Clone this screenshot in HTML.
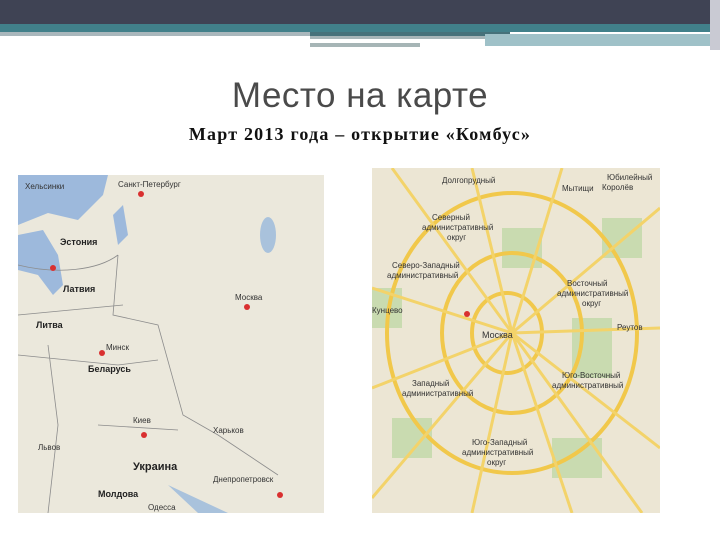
<!DOCTYPE html>
<html><head><meta charset="utf-8"><style>
body{margin:0;width:720px;height:540px;background:#fff;position:relative;overflow:hidden;font-family:"Liberation Sans",sans-serif}
.a{position:absolute}
</style></head><body>
<div class="a" style="left:0;top:0;width:720px;height:24px;background:#3f4354"></div>
<div class="a" style="left:0;top:24px;width:720px;height:8px;background:#41808a"></div>
<div class="a" style="left:0;top:32px;width:310px;height:4px;background:#a9b7bc"></div>
<div class="a" style="left:310px;top:32px;width:200px;height:4px;background:#46717a"></div>
<div class="a" style="left:310px;top:36px;width:175px;height:3px;background:#a7b5b8"></div>
<div class="a" style="left:310px;top:43px;width:110px;height:4px;background:#a6b5b6"></div>
<div class="a" style="left:485px;top:34px;width:225px;height:12px;background:#9fc1c8"></div>
<div class="a" style="left:710px;top:0;width:10px;height:50px;background:#c9cad3"></div>
<div class="a" style="left:0;top:76px;width:720px;text-align:center;font-size:35px;color:#4a4a4a;letter-spacing:0.5px">Место на карте</div>
<div class="a" style="left:0;top:124px;width:720px;text-align:center;font:bold 18px 'Liberation Serif',serif;color:#111;letter-spacing:1.2px">Март 2013 года – открытие «Комбус»</div>

<svg class="a" style="left:18px;top:175px" width="306" height="338" viewBox="0 0 306 338">
<rect width="306" height="338" fill="#ebe8dc"/>
<path d="M0 0H90L85 20L60 45L30 38L0 50Z" fill="#9db9dc"/>
<path d="M0 60L25 55L40 80L45 110L35 120L20 100L0 95Z" fill="#9db9dc"/>
<path d="M95 40L105 30L110 60L100 70Z" fill="#9db9dc"/>
<path d="M0 90C40 100 80 95 100 80M100 80L95 140L140 150L165 240L200 260L260 300M30 170L40 250L30 338M0 180L100 190L140 185M80 250L160 255M105 130L0 140" fill="none" stroke="#8c8c8c" stroke-width="0.8"/>
<ellipse cx="250" cy="60" rx="8" ry="18" fill="#a9c2dc"/>
<path d="M150 310L180 338H210Z" fill="#a9c2dc"/>
<g fill="#d93030"><circle cx="123" cy="19" r="3"/><circle cx="35" cy="93" r="3"/><circle cx="229" cy="132" r="3"/><circle cx="84" cy="178" r="3"/><circle cx="126" cy="260" r="3"/><circle cx="262" cy="320" r="3"/></g>
<g font-family="Liberation Sans" font-size="8" fill="#333">
<text x="100" y="12">Санкт-Петербург</text><text x="7" y="14">Хельсинки</text><text x="217" y="125">Москва</text><text x="88" y="175">Минск</text><text x="115" y="248">Киев</text><text x="195" y="258">Харьков</text><text x="195" y="307">Днепропетровск</text><text x="20" y="275">Львов</text><text x="130" y="335">Одесса</text>
<g font-weight="bold" font-size="9" fill="#222"><text x="42" y="70">Эстония</text><text x="45" y="117">Латвия</text><text x="18" y="153">Литва</text><text x="70" y="197">Беларусь</text><text x="115" y="295" font-size="11">Украина</text><text x="80" y="322">Молдова</text></g></g>
</svg>

<svg class="a" style="left:372px;top:168px" width="288" height="345" viewBox="0 0 288 345">
<rect width="288" height="345" fill="#ece6d4"/>
<g fill="#c9dbb0"><rect x="130" y="60" width="40" height="40"/><rect x="0" y="120" width="30" height="40"/><rect x="200" y="150" width="40" height="60"/><rect x="20" y="250" width="40" height="40"/><rect x="180" y="270" width="50" height="40"/><rect x="230" y="50" width="40" height="40"/></g>
<g fill="none" stroke="#f1c84b" stroke-width="4">
<ellipse cx="140" cy="165" rx="125" ry="140"/>
<ellipse cx="140" cy="165" rx="70" ry="80"/>
<ellipse cx="135" cy="165" rx="35" ry="40"/>
</g>
<g fill="none" stroke="#f3d36a" stroke-width="3">
<path d="M140 165L100 0M140 165L190 0M140 165L288 40M140 165L288 160M140 165L288 280M140 165L200 345M140 165L100 345M140 165L0 330M140 165L0 220M140 165L0 120M140 165L20 0M140 165L270 345"/>
</g>
<circle cx="95" cy="146" r="3" fill="#d93030"/>
<g font-family="Liberation Sans" font-size="8" fill="#333">
<text x="60" y="52">Северный</text><text x="50" y="62">административный</text><text x="75" y="72">округ</text>
<text x="20" y="100">Северо-Западный</text><text x="15" y="110">административный</text>
<text x="195" y="118">Восточный</text><text x="185" y="128">административный</text><text x="210" y="138">округ</text>
<text x="110" y="170" font-size="9">Москва</text>
<text x="40" y="218">Западный</text><text x="30" y="228">административный</text>
<text x="190" y="210">Юго-Восточный</text><text x="180" y="220">административный</text>
<text x="100" y="277">Юго-Западный</text><text x="90" y="287">административный</text><text x="115" y="297">округ</text>
<text x="235" y="12">Юбилейный</text><text x="230" y="22">Королёв</text><text x="70" y="15">Долгопрудный</text><text x="190" y="23">Мытищи</text><text x="0" y="145">Кунцево</text><text x="245" y="162">Реутов</text></g>
</svg>
</body></html>
